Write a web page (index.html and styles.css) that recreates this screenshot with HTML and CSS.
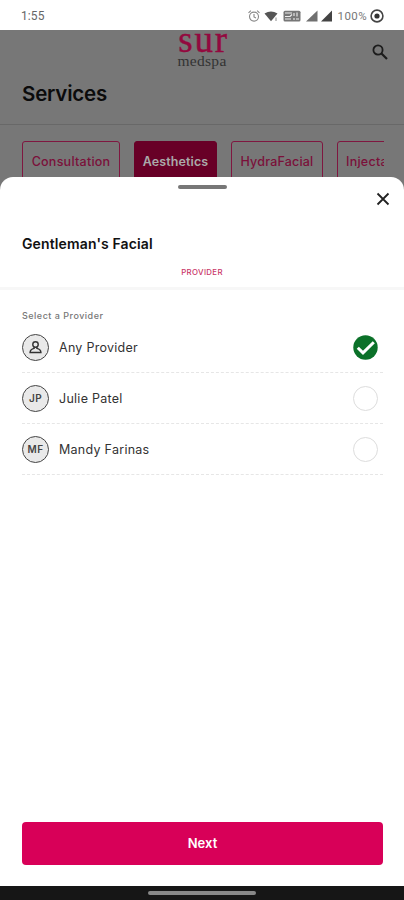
FILE: index.html
```html
<!DOCTYPE html>
<html lang="en">
<head>
<meta charset="utf-8">
<meta name="viewport" content="width=device-width, initial-scale=1">
<title>Sur Medspa – Services</title>
<link rel="stylesheet" href="styles.css">
</head>
<body>
<div class="phone">
  <div class="status">
    <span class="time">1:55</span>
    <svg class="status-icons" width="88" height="14" viewBox="0 0 88 14" fill="none">
      <g stroke="#888" stroke-width="1.1"><circle cx="7" cy="7.6" r="4.5"/><path d="M7 5v3l2 1M1.5 3.8l2.4-2.2M12.5 3.8l-2.4-2.2"/></g>
      <path d="M17.5 4.6Q24 .4 30.5 4.6L24 12.2z" fill="#555"/><path d="M29 8.500v3.500" stroke="#888"/>
      <rect x="36.500" y="1.800" width="17" height="10.600" rx="1.500" fill="#777"/>
      <path d="M38 4h7M38 7.500h5l2-2M38 10h6M47 4v3M47 9v2M50 3.500v4M49 10h3" stroke="#eee" stroke-width="1.100"/>
      <path d="M59 12.500H70.500V1.500z" fill="#707070"/><path d="M74 12.500H85V1.500z" fill="#444"/>
    </svg>
    <span class="battery">100%</span>
    <svg width="14" height="14" viewBox="0 0 14 14"><circle cx="7" cy="7" r="5.900" fill="none" stroke="#444" stroke-width="1.600"/><circle cx="7" cy="7" r="2.600" fill="#333"/></svg>
  </div>
  <main class="page">
    <header class="top">
      <div class="logo"><span class="logo-name">sur</span><span class="logo-sub">medspa</span></div>
      <svg class="search" width="18" height="18" viewBox="0 0 18 18" fill="none" stroke="#1c1c1c"><circle cx="7" cy="7" r="4.600" stroke-width="1.800"/><path d="M10.500 10.500L16 16" stroke-width="2.200"/></svg>
    </header>
    <h1>Services</h1>
    <nav class="chips">
      <span class="chip consultation">Consultation</span>
      <span class="chip active">Aesthetics</span>
      <span class="chip hydra">HydraFacial</span>
      <span class="chip last">Injectables</span>
    </nav>
    <section class="sheet">
      <div class="handle"></div>
      <div class="close-row"><svg width="14" height="14" viewBox="0 0 14 14"><path d="M1.500 1.500l11 11M12.500 1.500l-11 11" stroke="#222" stroke-width="1.800"/></svg></div>
      <h2>Gentleman's Facial</h2>
      <div class="tab">PROVIDER</div>
      <div class="list">
        <div class="label">Select a Provider</div>
        <div class="row">
          <span class="avatar"><svg width="15" height="15" viewBox="0 0 16 16" fill="none" stroke="#333" stroke-width="1.500"><circle cx="8" cy="4.800" r="2.900"/><path d="M6.500 7.500v1.400C4 9.500 2.300 10.500 2.200 13.300h11.600C13.700 10.500 12 9.500 9.500 8.900V7.500"/></svg></span>
          <span class="name any">Any Provider</span>
          <svg class="check" width="25" height="25" viewBox="0 0 25 25"><circle cx="12.500" cy="12.500" r="12.200" fill="#0b7129"/><path d="M4.800 12.700l5.200 5.200L20.800 7.200" fill="none" stroke="#fff" stroke-width="3"/></svg>
        </div>
        <div class="row"><span class="avatar">JP</span><span class="name">Julie Patel</span><span class="radio"></span></div>
        <div class="row"><span class="avatar">MF</span><span class="name">Mandy Farinas</span><span class="radio"></span></div>
      </div>
      <div class="next">Next</div>
    </section>
  </main>
  <div class="navbar"><span></span></div>
</div>
</body>
</html>
```
FILE: styles.css
```css
* { box-sizing: border-box; }
body { margin: 0; font-family: Inter, "Liberation Sans", sans-serif; background: #fff; }
svg { display: block; flex: none; }
.phone { width: 404px; height: 900px; display: flex; flex-direction: column; overflow: hidden; }
.status { height: 30px; flex: none; display: flex; align-items: center; padding: 1px 20px 0 21px; color: #666; }
.time { font: 12px Roboto, sans-serif; letter-spacing: .1px; }
.status-icons { margin-left: auto; }
.battery { font: 11.5px Roboto, sans-serif; letter-spacing: .4px; margin: 0 3px 0 3px; color: #777; }
.page { flex: 1; position: relative; background: #777; }
.top { height: 43px; display: flex; justify-content: center; position: relative; }
.logo { display: flex; flex-direction: column; align-items: center; font-family: "Liberation Serif", serif; }
.logo-name { font-size: 37px; line-height: 20px; height: 23px; letter-spacing: 1.7px; color: #93093f; -webkit-text-stroke: .4px #93093f; margin-right: -3px; }
.logo-sub { font-size: 15.5px; line-height: 16px; color: #333; letter-spacing: .3px; }
.search { position: absolute; right: 15px; top: 13px; }
h1 { margin: 0; height: 52px; padding: 6px 22px 0; font-size: 20.5px; line-height: 30px; font-weight: 600; letter-spacing: -.2px; color: #0b0b0b; border-bottom: 1px solid #686868; }
.chips { margin: 16px 20px 0 22px; display: flex; gap: 14px; overflow: hidden; }
.chip { flex: none; height: 41px; border: 1px solid #7f1740; border-radius: 3px; text-align: center; font-size: 12.5px; line-height: 39px; font-weight: 500; color: #7b103a; letter-spacing: .25px; width: 98px; }
.chip.active { width: 83px; background: #680027; border-color: #680027; color: #aaa; font-weight: 600; letter-spacing: .1px; }
.chip.hydra { width: 92px; letter-spacing: .2px; }
.chip.last { width: 92px; text-align: left; padding-left: 8px; }
.sheet { position: absolute; left: 0; right: 0; top: 147px; bottom: 0; background: #fff; border-radius: 13px 13px 0 0; display: flex; flex-direction: column; padding-top: 8px; }
.handle { width: 49px; height: 4px; border-radius: 2px; background: #777; align-self: center; flex: none; }
.close-row { display: flex; justify-content: flex-end; padding: 3px 14px 0; height: 39px; flex: none; }
h2 { margin: 0; padding: 0 22px; font-size: 14px; line-height: 32px; font-weight: 600; color: #111; letter-spacing: .13px; }
.tab { height: 27px; text-align: center; color: #c93468; font-size: 7.8px; line-height: 25px; font-weight: 500; letter-spacing: .35px; }
.list { border-top: 3px solid #f7f7f7; padding: 19px 21px 0 22px; flex: 1; }
.label { height: 13px; line-height: 14px; font-size: 9px; font-weight: 500; color: #777; letter-spacing: .5px; }
.row { height: 51px; display: flex; align-items: center; border-bottom: 1px dashed #e6e6e6; }
.avatar { width: 27px; height: 27px; border: 1.5px solid #444; border-radius: 50%; background: #e9e9e9; display: flex; align-items: center; justify-content: center; font-size: 10px; font-weight: 600; color: #444; letter-spacing: .4px; margin-right: 10px; }
.name { font-size: 12.5px; color: #333; letter-spacing: .27px; }
.check { margin: 0 5px 0 auto; }
.radio { width: 25px; height: 25px; border: 1.5px solid #ddd; border-radius: 50%; margin: 0 5px 0 auto; }
.next { margin: 0 21px 21px 22px; height: 43px; border-radius: 4px; background: #d80058; color: #fff; text-align: center; line-height: 43px; font-size: 13px; font-weight: 600; flex: none; }
.navbar { height: 14px; flex: none; background: #161616; display: flex; justify-content: center; padding-top: 5px; }
.navbar span { width: 108px; height: 4px; border-radius: 2px; background: #888; }
```
